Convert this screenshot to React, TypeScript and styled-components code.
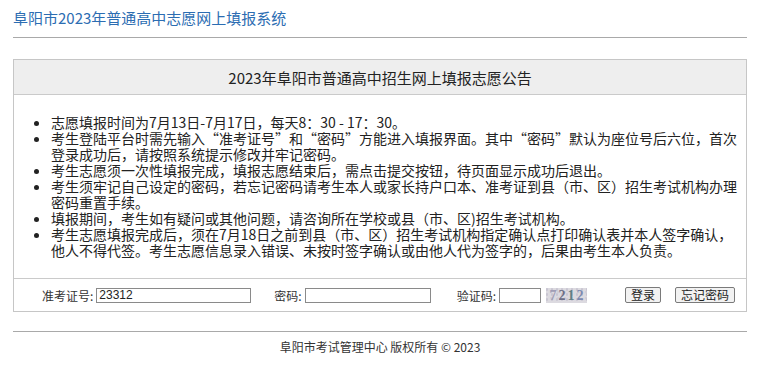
import React from "react";
import styled, { createGlobalStyle } from "styled-components";

const GlobalStyle = createGlobalStyle`
  html, body {
    margin: 0;
    padding: 0;
    background: #fff;
  }
  body {
    font-family: "Noto Sans CJK SC", "Liberation Sans", sans-serif;
    color: #222;
  }
`;

const Page = styled.div`
  width: 734px;
  padding: 8px 13px 0;
`;

const SiteTitle = styled.h1`
  margin: 0;
  font-size: 15px;
  font-weight: normal;
  line-height: 20px;
  color: #2c6db2;
`;

const Rule = styled.div<{ $top: number }>`
  margin-top: ${(p) => p.$top}px;
  border-top: 1px solid #a9a9a9;
`;

const Panel = styled.section`
  margin-top: 21px;
  border: 1px solid #c6c6c6;
`;

const PanelHead = styled.div`
  height: 34px;
  display: flex;
  align-items: center;
  justify-content: center;
  background: #eeeeee;
  border-bottom: 1px solid #cacaca;
  font-size: 15px;
  color: #222;
`;

const Notice = styled.ul`
  margin: 0;
  padding: 19px 2px 20px 37px;
  list-style: disc;
  font-size: 14px;
  line-height: 16px;
  color: #222;
`;

const LoginRow = styled.div`
  height: 32px;
  display: flex;
  align-items: center;
  padding-left: 28px;
  border-top: 1px solid #cacaca;
  font-size: 12px;
  color: #333;
`;

const Label = styled.label<{ $gap: number }>`
  margin-left: ${(p) => p.$gap}px;
  margin-right: 3px;
  white-space: nowrap;
`;

const Input = styled.input<{ $w: number }>`
  box-sizing: border-box;
  width: ${(p) => p.$w}px;
  height: 15px;
  margin: 0;
  padding: 0 2px;
  border: 1px solid #8a8a8a;
  font-family: "Liberation Sans", Arial, sans-serif;
  font-size: 12px;
  color: #222;
  outline: none;
`;

const Captcha = styled.span`
  margin-left: 5px;
  width: 41px;
  height: 15px;
  display: inline-flex;
  align-items: center;
  justify-content: center;
  gap: 2px;
  background:
    radial-gradient(circle at 20% 30%, #c9c6d2 0 1px, transparent 1.5px),
    radial-gradient(circle at 70% 70%, #d2cfd8 0 1px, transparent 1.5px),
    #dcdae0;
  background-size: 5px 5px, 7px 6px, auto;
  font-family: "Liberation Serif", "DejaVu Serif", serif;
  font-size: 14px;
  font-weight: bold;
  line-height: 15px;
`;

const Digit = styled.span<{ $c: string }>`
  color: ${(p) => p.$c};
`;

const Button = styled.button<{ $gap: number }>`
  margin-left: ${(p) => p.$gap}px;
  height: 16px;
  padding: 0 5px;
  border: 1px solid #7a7a7a;
  border-radius: 2px;
  background: #f2f2f2;
  font-family: "Noto Sans CJK SC", sans-serif;
  font-size: 12px;
  line-height: 14px;
  color: #222;
`;

const Footer = styled.div`
  padding-top: 7px;
  text-align: center;
  font-size: 12px;
  line-height: 16px;
  color: #333;
`;

const notices = [
  "志愿填报时间为7月13日-7月17日，每天8：30 - 17：30。",
  "考生登陆平台时需先输入“准考证号”和“密码”方能进入填报界面。其中“密码”默认为座位号后六位，首次登录成功后，请按照系统提示修改并牢记密码。",
  "考生志愿须一次性填报完成，填报志愿结束后，需点击提交按钮，待页面显示成功后退出。",
  "考生须牢记自己设定的密码，若忘记密码请考生本人或家长持户口本、准考证到县（市、区）招生考试机构办理密码重置手续。",
  "填报期间，考生如有疑问或其他问题，请咨询所在学校或县（市、区)招生考试机构。",
  "考生志愿填报完成后，须在7月18日之前到县（市、区）招生考试机构指定确认点打印确认表并本人签字确认，他人不得代签。考生志愿信息录入错误、未按时签字确认或由他人代为签字的，后果由考生本人负责。",
];

const captcha = [
  { d: "7", c: "#a09eb6" },
  { d: "2", c: "#6d6f86" },
  { d: "1", c: "#5f7f86" },
  { d: "2", c: "#7d8ab0" },
];

export default function App() {
  return (
    <Page>
      <GlobalStyle />
      <SiteTitle>阜阳市2023年普通高中志愿网上填报系统</SiteTitle>
      <Rule $top={9} />
      <Panel>
        <PanelHead>2023年阜阳市普通高中招生网上填报志愿公告</PanelHead>
        <Notice>
          {notices.map((n, i) => (
            <li key={i}>{n}</li>
          ))}
        </Notice>
        <LoginRow>
          <Label $gap={0}>准考证号:</Label>
          <Input $w={155} defaultValue="23312" />
          <Label $gap={23}>密码:</Label>
          <Input $w={126} type="password" />
          <Label $gap={26}>验证码:</Label>
          <Input $w={42} />
          <Captcha>
            {captcha.map((x, i) => (
              <Digit key={i} $c={x.c}>
                {x.d}
              </Digit>
            ))}
          </Captcha>
          <Button $gap={38}>登录</Button>
          <Button $gap={14}>忘记密码</Button>
        </LoginRow>
      </Panel>
      <Rule $top={19} />
      <Footer>阜阳市考试管理中心 版权所有 © 2023</Footer>
    </Page>
  );
}
